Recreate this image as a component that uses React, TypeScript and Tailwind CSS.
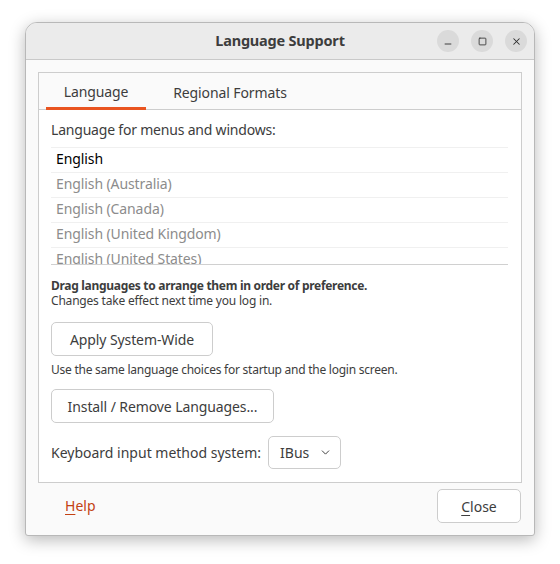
import { Minus, Square, X, ChevronDown } from 'lucide-react';

const languages = [
  'English',
  'English (Australia)',
  'English (Canada)',
  'English (United Kingdom)',
  'English (United States)',
];

export default function App() {
  return (
    <div
      className="w-[560px] h-[564px] bg-white pt-[22px] pl-[25px]"
      style={{ fontFamily: '"Noto Sans", sans-serif' }}
    >
      <div className="w-[510px] h-[514px] flex flex-col rounded-t-[12px] rounded-b-[3px] border border-[#b8b8b8] bg-[#fafafa] shadow-[0_4px_16px_rgba(0,0,0,0.28)] overflow-hidden">
        {/* header bar */}
        <div className="h-[37px] shrink-0 flex items-center bg-[#ebebeb] border-b border-[#c9c9c9] relative">
          <div className="flex-1 text-center text-[14.5px] font-bold text-[#3d3d3d] tracking-[-0.2px]">
            Language Support
          </div>
          <div className="absolute right-[7px] top-[7px] flex gap-[12px]">
            <div className="w-[22px] h-[22px] rounded-full bg-[#dadada] flex items-center justify-center text-[#2e2e2e]">
              <Minus size={10} strokeWidth={2.2} className="mt-[5px]" />
            </div>
            <div className="w-[22px] h-[22px] rounded-full bg-[#dadada] flex items-center justify-center text-[#2e2e2e]">
              <Square size={9} strokeWidth={2.2} />
            </div>
            <div className="w-[22px] h-[22px] rounded-full bg-[#dadada] flex items-center justify-center text-[#2e2e2e]">
              <X size={11} strokeWidth={2.2} />
            </div>
          </div>
        </div>

        {/* body */}
        <div className="flex-1 flex flex-col px-[12px] pt-[12px]">
          <div className="h-[411px] flex flex-col border border-[#cdcdcd] bg-white">
            {/* tabs */}
            <div className="h-[37px] shrink-0 flex items-stretch bg-[#fafafa] border-b border-[#cdcdcd] px-[7px]">
              <div className="w-[100px] flex items-center justify-center text-[14px] text-[#3d3d3d] tracking-[-0.1px] border-b-[3px] border-[#e95420] pt-[3px] mb-[-1px]">
                Language
              </div>
              <div className="ml-[7px] w-[154px] flex items-center justify-center text-[14px] text-[#3d3d3d] tracking-[-0.1px] pt-[2px]">
                Regional Formats
              </div>
            </div>

            {/* content */}
            <div className="flex-1 flex flex-col px-[12px] pt-[11px] text-[#3d3d3d]">
              <div className="text-[14px] leading-[18px] tracking-[-0.2px]">Language for menus and windows:</div>
              <div className="mt-[8px] h-[118px] overflow-hidden border-b border-[#d0d0d0] mr-[1px]">
                {languages.map((lang, i) => (
                  <div
                    key={lang}
                    className={`h-[25px] flex items-center pl-[5px] pb-[3px] border-t border-[#f0f0f0] text-[14px] tracking-[-0.1px] ${
                      i === 0 ? 'text-black' : 'text-[#8c8c8c]'
                    }`}
                  >
                    {lang}
                  </div>
                ))}
              </div>

              <div className="mt-[13px] text-[12px] font-bold leading-[15px] tracking-[-0.3px]">
                Drag languages to arrange them in order of preference.
              </div>
              <div className="text-[12px] leading-[16px] tracking-[-0.2px]">Changes take effect next time you log in.</div>

              <button className="mt-[13px] w-[162px] h-[34px] rounded-[5px] border border-[#cdcdcd] bg-white text-[14px] text-[#3d3d3d] tracking-[-0.1px]">
                Apply System-Wide
              </button>
              <div className="mt-[6px] text-[12px] leading-[16px] tracking-[-0.25px]">
                Use the same language choices for startup and the login screen.
              </div>

              <button className="mt-[11px] w-[223px] h-[34px] rounded-[5px] border border-[#cdcdcd] bg-white text-[14px] text-[#3d3d3d] tracking-[-0.1px]">
                Install / Remove Languages...
              </button>

              <div className="mt-[13px] flex items-center gap-[7px]">
                <span className="text-[14px]">Keyboard input method system:</span>
                <div className="w-[73px] h-[33px] rounded-[5px] border border-[#cdcdcd] bg-white flex items-center pl-[11px] gap-[10px] text-[14px]">
                  IBus
                  <ChevronDown size={13} strokeWidth={1.8} className="text-[#3d3d3d]" />
                </div>
              </div>
            </div>
          </div>

          {/* footer */}
          <div className="flex items-center justify-between mt-[6px] pl-[27px] pr-[1px]">
            <span className="text-[14px] text-[#c34113] mt-[-2px]">
              <span className="underline underline-offset-[3px]">H</span>elp
            </span>
            <button className="w-[84px] h-[34px] rounded-[5px] border border-[#cdcdcd] bg-white text-[14px] text-[#3d3d3d]">
              <span className="underline underline-offset-[3px]">C</span>lose
            </button>
          </div>
        </div>
      </div>
    </div>
  );
}
